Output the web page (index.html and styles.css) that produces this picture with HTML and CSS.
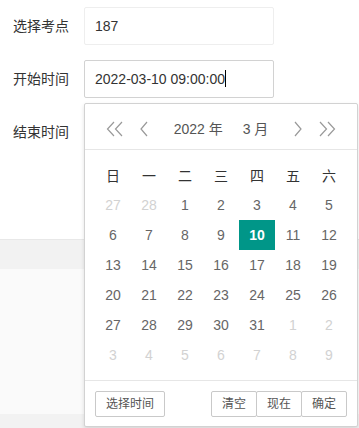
FILE: index.html
```html
<!DOCTYPE html>
<html lang="zh-CN">
<head>
    <meta charset="UTF-8">
    <meta name="viewport" content="width=device-width, initial-scale=1.0">
    <title>考试时间设置</title>
    <link rel="stylesheet" href="styles.css">
</head>
<body>
    <form class="form">
        <div class="form-item">
            <label class="form-label">选择考点</label>
            <div class="input-block">
                <input class="input" type="text" value="187">
            </div>
        </div>
        <div class="form-item">
            <label class="form-label">开始时间</label>
            <div class="input-block">
                <div class="input input-focus">2022-03-10 09:00:00<span class="caret"></span></div>

                <div class="laydate">
                    <div class="laydate-header">
                        <span class="ld-icon prev-y">
                            <svg width="18" height="16" viewBox="0 0 18 16"><path d="M8 1 1.5 8 8 15M16 1 9.5 8 16 15" fill="none" stroke="#999" stroke-width="1.2"/></svg>
                        </span>
                        <span class="ld-icon prev-m">
                            <svg width="8" height="16" viewBox="0 0 8 16"><path d="M7 1 1 8 7 15" fill="none" stroke="#999" stroke-width="1.2"/></svg>
                        </span>
                        <div class="laydate-set-ym">
                            <span>2022 年</span>
                            <span>3 月</span>
                        </div>
                        <span class="ld-icon next-m">
                            <svg width="8" height="16" viewBox="0 0 8 16"><path d="M1 1 7 8 1 15" fill="none" stroke="#999" stroke-width="1.2"/></svg>
                        </span>
                        <span class="ld-icon next-y">
                            <svg width="18" height="16" viewBox="0 0 18 16"><path d="M2 1 8.5 8 2 15M10 1 16.5 8 10 15" fill="none" stroke="#999" stroke-width="1.2"/></svg>
                        </span>
                    </div>

                    <div class="laydate-content">
                        <table>
                            <thead>
                                <tr><th>日</th><th>一</th><th>二</th><th>三</th><th>四</th><th>五</th><th>六</th></tr>
                            </thead>
                            <tbody>
                                <tr><td class="other">27</td><td class="other">28</td><td>1</td><td>2</td><td>3</td><td>4</td><td>5</td></tr>
                                <tr><td>6</td><td>7</td><td>8</td><td>9</td><td class="this">10</td><td>11</td><td>12</td></tr>
                                <tr><td>13</td><td>14</td><td>15</td><td>16</td><td>17</td><td>18</td><td>19</td></tr>
                                <tr><td>20</td><td>21</td><td>22</td><td>23</td><td>24</td><td>25</td><td>26</td></tr>
                                <tr><td>27</td><td>28</td><td>29</td><td>30</td><td>31</td><td class="other">1</td><td class="other">2</td></tr>
                                <tr><td class="other">3</td><td class="other">4</td><td class="other">5</td><td class="other">6</td><td class="other">7</td><td class="other">8</td><td class="other">9</td></tr>
                            </tbody>
                        </table>
                    </div>

                    <div class="laydate-footer">
                        <span class="btn">选择时间</span>
                        <div class="footer-btns">
                            <span class="btn">清空</span><span class="btn">现在</span><span class="btn">确定</span>
                        </div>
                    </div>
                </div>
            </div>
        </div>
        <div class="form-item">
            <label class="form-label">结束时间</label>
            <div class="input-block">
                <input class="input" type="text" value="">
            </div>
        </div>
    </form>

    <div class="table-head"></div>
    <div class="table-body"></div>
    <div class="table-foot"></div>
</body>
</html>
```

FILE: styles.css
```css
body {
    margin: 0;
    padding: 7px 0 0;
    font-family: 'Liberation Sans', 'Noto Sans CJK SC', sans-serif;
    font-size: 14px;
    color: #333;
    background: #fff;
    overflow: hidden;
}

.form {
    margin: 0;
}

.form-item {
    display: flex;
    margin-bottom: 15px;
}

.form-label {
    width: 69px;
    padding-right: 15px;
    text-align: right;
    line-height: 38px;
    color: #333;
}

.input-block {
    position: relative;
    width: 190px;
}

.input {
    box-sizing: border-box;
    display: block;
    width: 190px;
    height: 38px;
    margin: 0;
    padding: 0 10px;
    border: 1px solid #eee;
    border-radius: 2px;
    background: #fff;
    font-family: inherit;
    font-size: 14px;
    line-height: 36px;
    color: #333;
    outline: none;
}

.input-focus {
    border-color: #d2d2d2;
}

.caret {
    display: inline-block;
    width: 1px;
    height: 17px;
    background: #000;
    vertical-align: -3px;
}

/* date picker */
.laydate {
    position: absolute;
    top: 43px;
    left: 0;
    z-index: 10;
    width: 272px;
    border: 1px solid #d2d2d2;
    border-radius: 2px;
    background: #fff;
    box-shadow: 0 2px 4px rgba(0, 0, 0, .12);
}

.laydate-header {
    position: relative;
    height: 30px;
    padding: 10px 70px 5px;
    line-height: 30px;
    border-bottom: 1px solid #e6e6e6;
}

.ld-icon {
    position: absolute;
    top: 10px;
    height: 30px;
    display: flex;
    align-items: center;
}

.prev-y { left: 21px; }
.prev-m { left: 55px; }
.next-m { right: 55px; }
.next-y { right: 21px; }

.laydate-set-ym {
    display: flex;
    justify-content: center;
    color: #555;
}

.laydate-set-ym span {
    padding: 0 10px;
}

.laydate-content {
    padding: 10px;
}

.laydate-content table {
    border-collapse: collapse;
    border-spacing: 0;
}

.laydate-content th,
.laydate-content td {
    width: 36px;
    height: 30px;
    padding: 0;
    text-align: center;
    font-weight: 400;
}

.laydate-content th {
    color: #333;
}

.laydate-content td {
    color: #666;
}

.laydate-content td.other {
    color: #d2d2d2;
}

.laydate-content td.this {
    background: #009688;
    color: #fff;
    font-weight: 700;
}

.laydate-footer {
    display: flex;
    justify-content: space-between;
    padding: 10px 10px 9px;
    border-top: 1px solid #e6e6e6;
}

.footer-btns {
    display: flex;
}

.footer-btns .btn {
    margin-left: -1px;
}

.btn {
    display: inline-block;
    height: 24px;
    padding: 0 10px;
    border: 1px solid #c9c9c9;
    border-radius: 2px;
    background: #fff;
    font-size: 12px;
    line-height: 24px;
    color: #555;
}

/* page table behind */
.table-head {
    margin-top: 88px;
    height: 29px;
    border-top: 1px solid #e8e8e8;
    background: #f2f2f2;
}

.table-body {
    height: 145px;
    background: #fafafa;
}

.table-foot {
    height: 30px;
    background: #f2f2f2;
}
```
